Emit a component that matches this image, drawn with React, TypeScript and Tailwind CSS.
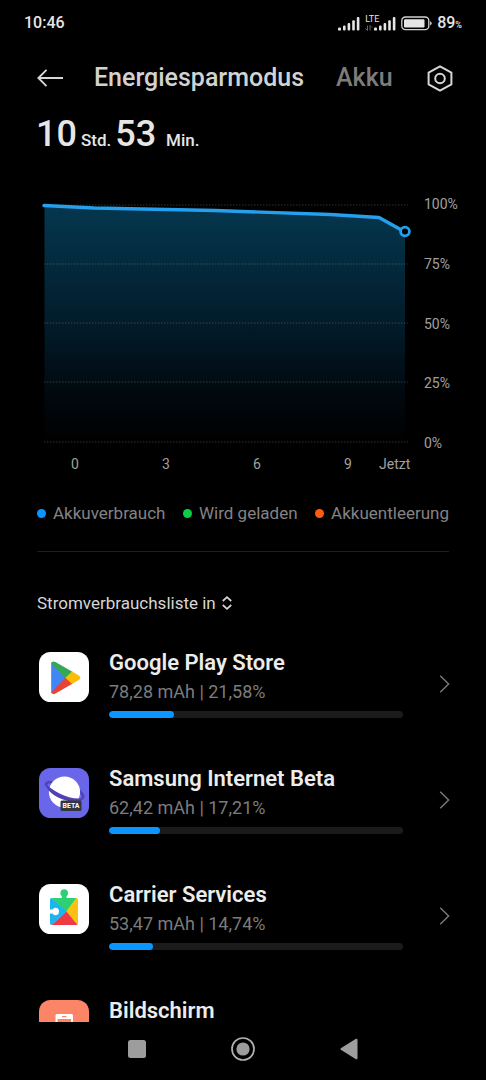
/**
 * App.tsx
 *
 * Battery usage screen:
 *   - System status bar
 *   - Tabs and remaining runtime
 *   - Battery level chart with legend
 *   - Consumption list per app
 *   - System navigation bar
 */

import type { ReactNode } from "react";

const Y_LABELS = ["100%", "75%", "50%", "25%", "0%"];
const GRID_LINES = [1, 60, 119, 178, 238];

const LEGEND = [
  { label: "Akkuverbrauch", dot: "bg-[#0a95ff]" },
  { label: "Wird geladen", dot: "bg-[#0bce46]" },
  { label: "Akkuentleerung", dot: "bg-[#ff5a10]" },
];

interface Consumer {
  name: string;
  usage?: string;
  percent: number;
  icon: ReactNode;
}

const CONSUMERS: Consumer[] = [
  {
    name: "Google Play Store",
    usage: "78,28 mAh | 21,58%",
    percent: 22,
    icon: <PlayStoreIcon />,
  },
  {
    name: "Samsung Internet Beta",
    usage: "62,42 mAh | 17,21%",
    percent: 17.21,
    icon: <SamsungInternetIcon />,
  },
  {
    name: "Carrier Services",
    usage: "53,47 mAh | 14,74%",
    percent: 15,
    icon: <CarrierIcon />,
  },
  { name: "Bildschirm", percent: 10, icon: <ScreenIcon /> },
];

export default function App() {
  return (
    <div className="flex h-screen flex-col bg-black font-[Roboto,sans-serif] text-[#e6e6e6]">
      <StatusBar />
      <Header />

      <main className="min-h-0 flex-1 overflow-hidden">
        <Runtime />
        <BatteryChart />
        <Legend />

        <div className="mx-[37px] mt-[26px] border-t border-[#1e1e1e]" />

        <button className="mt-[39px] ml-[37px] flex items-center gap-[6px] text-[17px] leading-6 text-[#d6d6d6]">
          Stromverbrauchsliste in
          <svg width="10" height="14" viewBox="0 0 10 14" fill="none" stroke="currentColor" strokeWidth="1.7">
            <path d="M0.8 5 5 1.2 9.2 5M0.8 9 5 12.8 9.2 9" />
          </svg>
        </button>

        <ul className="mt-[37px]">
          {CONSUMERS.map((c) => (
            <ConsumerRow key={c.name} consumer={c} />
          ))}
        </ul>
      </main>

      <NavBar />
    </div>
  );
}

function StatusBar() {
  return (
    <div className="flex h-[46px] shrink-0 items-center justify-between pr-6 pl-6">
      <span className="text-base font-medium">10:46</span>
      <div className="flex items-center gap-[5px]">
        <SignalBars />
        <div className="relative flex h-[15px] w-[31px] items-end justify-end">
          <span className="absolute top-[-1px] left-0 text-[9px] leading-[9px]">LTE</span>
          <svg className="absolute bottom-0 left-0" width="8" height="6" viewBox="0 0 8 6" fill="none" stroke="#666" strokeWidth="1">
            <path d="M2.5 0.5V5.5M0.5 3.5 2.5 5.5M5 0.5V5.5M5 0.5 7 2.5" />
          </svg>
          <SignalBars />
        </div>
        <svg width="31" height="15" viewBox="0 0 31 15">
          <rect x="0.8" y="1" width="27" height="12.6" rx="3.6" fill="none" stroke="#d0d0d0" strokeWidth="1.3" />
          <rect x="3" y="3.2" width="20.5" height="8.2" rx="1.2" fill="#e6e6e6" />
          <path d="M29.2 5.2q1.4.6 1.4 2.1t-1.4 2.1z" fill="#e6e6e6" />
        </svg>
        <span className="text-base font-medium">
          89<span className="text-[9px]">%</span>
        </span>
      </div>
    </div>
  );
}

function SignalBars() {
  return (
    <svg width="22" height="15" viewBox="0 0 22 15" fill="#e6e6e6">
      <rect x="0" y="11.6" width="3" height="3" rx="1.2" />
      <rect x="5" y="9.4" width="2.6" height="5.2" rx="1" />
      <rect x="9.6" y="7" width="2.6" height="7.6" rx="1" />
      <rect x="14.2" y="4.2" width="2.6" height="10.4" rx="1" />
      <rect x="18.8" y="1" width="2.6" height="13.6" rx="1" />
    </svg>
  );
}

function Header() {
  return (
    <header className="flex h-16 shrink-0 items-center pr-[33px] pl-[37px]">
      <button aria-label="Zurück">
        <svg width="27" height="18" viewBox="0 0 27 18" fill="none" stroke="#d6d6d6" strokeWidth="1.9">
          <path d="M9.5 0.9 1.4 9l8.1 8.1M1.4 9H26" />
        </svg>
      </button>
      <button className="ml-[30px] text-[25px] font-medium text-[#d2d2d2]">
        Energiesparmodus
      </button>
      <button className="ml-8 text-[25px] font-medium text-[#7c7c7c]">Akku</button>
      <button className="ml-auto" aria-label="Einstellungen">
        <svg width="26" height="27" viewBox="0 0 26 27" fill="none" stroke="#d6d6d6" strokeWidth="2">
          <path d="M13 1.4 24.4 7.6V19.4L13 25.6 1.6 19.4V7.6Z" strokeLinejoin="round" />
          <circle cx="13" cy="13.5" r="4.8" />
        </svg>
      </button>
    </header>
  );
}

function Runtime() {
  return (
    <div className="flex items-baseline gap-1 pl-9 text-[17px] leading-[48px] font-medium">
      <span className="text-4xl leading-[48px]">10</span>
      <span>Std.</span>
      <span className="text-4xl leading-[48px]">53</span>
      <span className="ml-[6px]">Min.</span>
    </div>
  );
}

function BatteryChart() {
  return (
    <section className="mt-[30px] grid grid-cols-[1fr_33px] gap-x-4 gap-y-px pr-[29px] pl-11 text-sm leading-5 text-[#a0a0a0]">
      <div className="py-[10px]">
        <svg className="block h-auto w-full overflow-visible" viewBox="0 0 364 239" fill="none">
          <defs>
            <linearGradient id="level" x1="0" y1="0" x2="0" y2="1">
              <stop offset="0" stopColor="#05374f" />
              <stop offset="0.5" stopColor="#021c2a" />
              <stop offset="0.8" stopColor="#01080e" />
              <stop offset="1" stopColor="#000" />
            </linearGradient>
          </defs>
          <path d="M0.5 1.5 50 4 171 6.5 286 10.5 335 13.5 361 28V238H0.5Z" fill="url(#level)" />
          {GRID_LINES.map((y) => (
            <path key={y} d={`M0 ${y}H364`} stroke="#fff" strokeOpacity="0.2" strokeDasharray="1.5 1.5" />
          ))}
          <path
            d="M0 1.5 50 4 171 6.5 286 10.5 335 13.5 361 28"
            stroke="#24a0ee"
            strokeWidth="3.4"
            strokeLinecap="round"
            strokeLinejoin="round"
          />
          <circle cx="361" cy="27.5" r="4.4" fill="#000" stroke="#24a0ee" strokeWidth="2.8" />
        </svg>
      </div>
      <div className="flex flex-col justify-between">
        {Y_LABELS.map((label) => (
          <span key={label}>{label}</span>
        ))}
      </div>
      <div className="grid grid-cols-[91fr_91fr_91fr_35fr_29fr] pl-[27px]">
        <span>0</span>
        <span>3</span>
        <span>6</span>
        <span>9</span>
        <span className="min-w-0">Jetzt</span>
      </div>
    </section>
  );
}

function Legend() {
  return (
    <ul className="mx-[37px] mt-[27px] flex justify-between text-[17px] leading-6 text-[#838383]">
      {LEGEND.map(({ label, dot }) => (
        <li key={label} className="flex items-center gap-[7px]">
          <span className={`size-[9px] rounded-full ${dot}`} />
          {label}
        </li>
      ))}
    </ul>
  );
}

function ConsumerRow({ consumer }: { consumer: Consumer }) {
  const { name, usage, percent, icon } = consumer;

  return (
    <li className="h-[116px]">
      <a href="#" className="flex pr-9 pl-[39px]">
        {icon}
        <div className="ml-5 flex-1">
          <div className="text-[22px] leading-[22px] font-semibold text-[#ececec]">{name}</div>
          <div className="mt-[6px] h-6 text-[18px] leading-6 text-[#7c7c7c]">{usage}</div>
          <div className="mt-[7px] h-[7px] overflow-hidden rounded-full bg-[#1b1b1b]">
            <div className="h-full rounded-full bg-[#0a95ff]" style={{ width: `${percent}%` }} />
          </div>
        </div>
        <svg
          className="mt-[23px] ml-9 shrink-0"
          width="11"
          height="18"
          viewBox="0 0 11 18"
          fill="none"
          stroke="#777"
          strokeWidth="1.5"
        >
          <path d="M1.2 0.8 9.6 9 1.2 17.2" />
        </svg>
      </a>
    </li>
  );
}

function PlayStoreIcon() {
  return (
    <svg className="size-[50px] shrink-0" viewBox="0 0 50 50">
      <rect width="50" height="50" rx="11.5" fill="#fff" />
      <path d="M12.2 11.5V40q0 .8.5 1.3L27.5 26 12.7 10.2Q12.2 10.7 12.2 11.5Z" fill="#4285f4" />
      <path d="M12.5 10.5Q14 8.8 16.5 10.1L33.8 20 26.8 26.6 12.5 11.5Z" fill="#34a853" />
      <path d="M12.5 41.1Q14 42.8 16.5 41.5L33.8 31.6 26.8 25.2 12.5 40Z" fill="#ea4335" />
      <path d="M33 19.5 39.8 23.5Q43 25.8 39.8 28.1L33 32.1 26.4 25.8Z" fill="#fbbc04" />
    </svg>
  );
}

function SamsungInternetIcon() {
  return (
    <svg className="size-[50px] shrink-0" viewBox="0 0 50 50">
      <rect width="50" height="50" rx="11.5" fill="#6a66ea" />
      <path
        d="M13 14.2C8.5 13.5 6.5 15 7.3 18M40 22.5C43.5 25.5 45 28.5 43.5 30.5"
        fill="none"
        stroke="#5142b4"
        strokeWidth="2.6"
      />
      <circle cx="25.5" cy="24" r="15.6" fill="#fff" />
      <path
        d="M6.2 14.5C6 23 20 32.8 35 33.8 40 34 43.5 33 44.8 30 38 31.5 28 29.5 20.5 25.5 13.5 21.8 8.5 18 6.2 14.5Z"
        fill="#5142b4"
      />
      <rect x="21.5" y="32.5" width="21" height="10.5" rx="1.5" fill="#35353d" />
      <text x="32" y="40.2" textAnchor="middle" fontSize="7" fontWeight="700" fill="#fff">
        BETA
      </text>
    </svg>
  );
}

function CarrierIcon() {
  return (
    <svg className="size-[50px] shrink-0" viewBox="0 0 50 50">
      <rect width="50" height="50" rx="11.5" fill="#fff" />
      <path d="M12.5 14H37.7L27.5 27.7H26Z" fill="#2fd072" />
      <circle cx="25.2" cy="9" r="3.8" fill="#2fd072" />
      <path d="M22.8 10H27.6V14.5H22.8Z" fill="#2fd072" />
      <path d="M37.5 14Q39 14.2 39 15.5V39.5Q39 40.7 38 41L27.3 27.5Z" fill="#fcc10f" />
      <path d="M12.5 41 27.3 27.3 38.5 41Z" fill="#ee3a45" />
      <path d="M12.5 14 27.5 27.5 12.5 41Q11 40.7 11 39.5V15.5Q11 14.2 12.5 14Z" fill="#1cb5f0" />
      <path d="M10.5 25.5H13.5Q14.5 23.8 16.3 23.8A3.7 3.7 0 0 1 16.3 31.2Q14.5 31.2 13.5 29.5H10.5Z" fill="#fff" />
    </svg>
  );
}

function ScreenIcon() {
  return (
    <svg className="size-[50px] shrink-0" viewBox="0 0 50 50">
      <rect width="50" height="50" rx="11.5" fill="#fd8567" />
      <rect x="16.5" y="14" width="17.5" height="26" rx="1.5" fill="#fff" />
      <rect x="18.5" y="19" width="13.5" height="16" fill="#fd8567" />
      <rect x="23" y="16" width="4.5" height="1.2" fill="#fd8567" />
    </svg>
  );
}

function NavBar() {
  return (
    <nav className="flex h-[58px] shrink-0 items-center justify-center gap-[81px] bg-black pb-1">
      <button aria-label="Letzte Apps">
        <svg width="26" height="26" viewBox="0 0 26 26" fill="#9d9d9d">
          <rect x="4" y="4" width="18" height="18" rx="2.5" />
        </svg>
      </button>
      <button aria-label="Startbildschirm">
        <svg width="24" height="24" viewBox="0 0 24 24">
          <circle cx="12" cy="12" r="11" fill="none" stroke="#b0b0b0" strokeWidth="1.7" />
          <circle cx="12" cy="12" r="6.6" fill="#9d9d9d" />
        </svg>
      </button>
      <button aria-label="Zurück">
        <svg width="26" height="26" viewBox="0 0 26 26" fill="#9d9d9d">
          <path d="M4.8 12.2 20 2.8Q21.5 2.3 21.5 3.8V22.2Q21.5 23.7 20 23.2L4.8 13.8Q4 13 4.8 12.2Z" />
        </svg>
      </button>
    </nav>
  );
}
